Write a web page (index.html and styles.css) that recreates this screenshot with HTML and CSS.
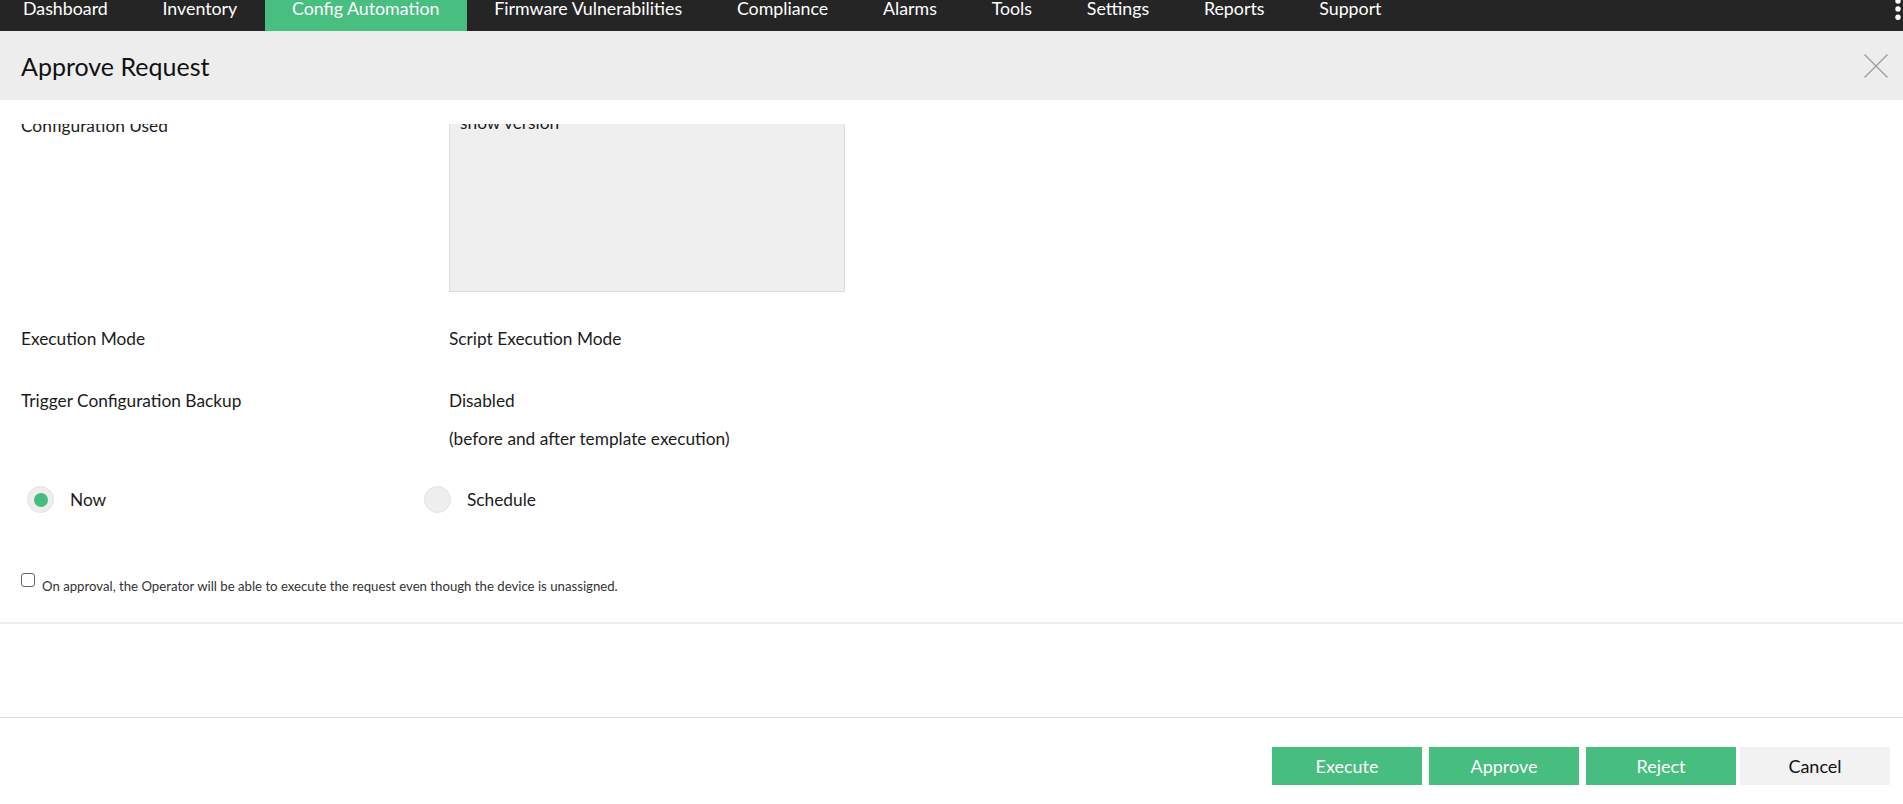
FILE: index.html
```html
<!DOCTYPE html>
<html lang="en">
<head>
    <meta charset="UTF-8">
    <meta name="viewport" content="width=device-width, initial-scale=1.0">
    <title>Approve Request</title>
    <link rel="stylesheet" href="styles.css">
</head>
<body>

<div class="topnav">
    <a href="#">Dashboard</a>
    <a href="#">Inventory</a>
    <a href="#" class="active">Config Automation</a>
    <a href="#">Firmware Vulnerabilities</a>
    <a href="#">Compliance</a>
    <a href="#">Alarms</a>
    <a href="#">Tools</a>
    <a href="#">Settings</a>
    <a href="#">Reports</a>
    <a href="#">Support</a>
    <svg class="more-dots" width="10" height="22" viewBox="0 0 10 22">
        <circle cx="5" cy="1" r="2.7" fill="#fff"/>
        <circle cx="5" cy="9" r="2.7" fill="#fff"/>
        <circle cx="5" cy="17.3" r="2.7" fill="#fff"/>
    </svg>
</div>

<div class="modal-head">
    <h2>Approve Request</h2>
    <svg class="close-btn" width="24" height="24" viewBox="0 0 24 24">
        <path d="M0.5 0.5 L23.5 23.5 M23.5 0.5 L0.5 23.5" stroke="#9a9a9a" stroke-width="1.2" fill="none"/>
    </svg>
</div>

<div class="modal-body">
    <div class="scroll-area">
        <div class="row row-config">
            <div class="label">Configuration Used</div>
            <div class="config-box">show version</div>
        </div>

        <div class="row row-mode">
            <div class="label">Execution Mode</div>
            <div class="value">Script Execution Mode</div>
        </div>

        <div class="row row-backup">
            <div class="label">Trigger Configuration Backup</div>
            <div class="value">
                <div>Disabled</div>
                <div class="note">(before and after template execution)</div>
            </div>
        </div>

        <div class="radio-row">
            <label class="radio-opt"><span class="radio checked"></span>Now</label>
            <label class="radio-opt"><span class="radio"></span>Schedule</label>
        </div>

        <div class="check-row">
            <span class="checkbox"></span>
            <span class="check-text">On approval, the Operator will be able to execute the request even though the device is unassigned.</span>
        </div>
    </div>
</div>

<div class="modal-foot">
    <button class="btn">Execute</button>
    <button class="btn">Approve</button>
    <button class="btn">Reject</button>
    <button class="btn btn-cancel">Cancel</button>
</div>

</body>
</html>
```

FILE: styles.css
```css
body {
    margin: 0;
    font-family: Lato, "Liberation Sans", sans-serif;
    background: #fff;
    color: #1c1c1c;
    overflow: hidden;
}
.topnav {
    position: relative;
    display: flex;
    height: 31px;
    background: #252525;
}
.topnav a {
    display: block;
    padding: 0 27.4px;
    font-size: 17.8px;
    line-height: 17px;
    color: #fff;
    text-decoration: none;
}
.topnav a:first-child {
    padding-left: 23px;
}
.topnav a.active {
    background: #48be80;
}
.more-dots {
    position: absolute;
    right: 0;
    top: 0;
}
.modal-head {
    display: flex;
    align-items: center;
    justify-content: space-between;
    height: 69px;
    padding: 0 15px 0 21px;
    background: #ededed;
}
.modal-head h2 {
    margin: 0;
    font-size: 25px;
    font-weight: normal;
    color: #111;
}
.close-btn {
    margin-top: 1px;
}
.modal-body {
    padding-top: 24px;
}
.scroll-area {
    height: 498px;
    overflow: hidden;
    border-bottom: 2px solid #ededed;
}
.row {
    display: grid;
    grid-template-columns: 428px 1fr;
    padding-left: 21px;
    font-size: 17.3px;
    line-height: 20px;
}
.row-config {
    margin-top: -17px;
}
.row-config .label {
    margin-top: 9px;
}
.config-box {
    box-sizing: border-box;
    width: 396px;
    height: 185px;
    padding: 5px 10px;
    background: #efefef;
    border: 1px solid #dcdcdc;
}
.row-mode {
    margin-top: 37px;
}
.row-backup {
    margin-top: 42px;
}
.note {
    margin-top: 18px;
}
.radio-row {
    display: grid;
    grid-template-columns: 397px 1fr;
    margin-top: 37px;
    padding-left: 27px;
    font-size: 17.3px;
}
.radio-opt {
    display: flex;
    align-items: center;
    gap: 16px;
}
.radio {
    position: relative;
    box-sizing: border-box;
    width: 27px;
    height: 27px;
    border-radius: 50%;
    background: #eee;
    border: 1px solid #e2e2e2;
}
.radio.checked::after {
    content: "";
    position: absolute;
    left: 5.5px;
    top: 5.5px;
    width: 14px;
    height: 14px;
    border-radius: 50%;
    background: #45bd7e;
}
.check-row {
    display: flex;
    gap: 7px;
    margin-top: 60px;
    padding-left: 21px;
}
.checkbox {
    box-sizing: border-box;
    width: 14px;
    height: 14px;
    border: 1px solid #666;
    border-radius: 3px;
    background: #fff;
}
.check-text {
    margin-top: 5px;
    font-size: 13.2px;
    line-height: 16px;
    color: #333;
}
.modal-foot {
    display: flex;
    justify-content: flex-end;
    margin-top: 93px;
    padding: 29px 13px 0 0;
    border-top: 1px solid #dddddd;
}
.btn {
    width: 150px;
    height: 38px;
    border: none;
    background: #47bd7f;
    color: #fff;
    font-family: Lato, "Liberation Sans", sans-serif;
    font-size: 18px;
    cursor: pointer;
}
.btn + .btn {
    margin-left: 7px;
}
.btn.btn-cancel {
    margin-left: 4px;
    background: #f2f2f2;
    color: #111;
}
```
